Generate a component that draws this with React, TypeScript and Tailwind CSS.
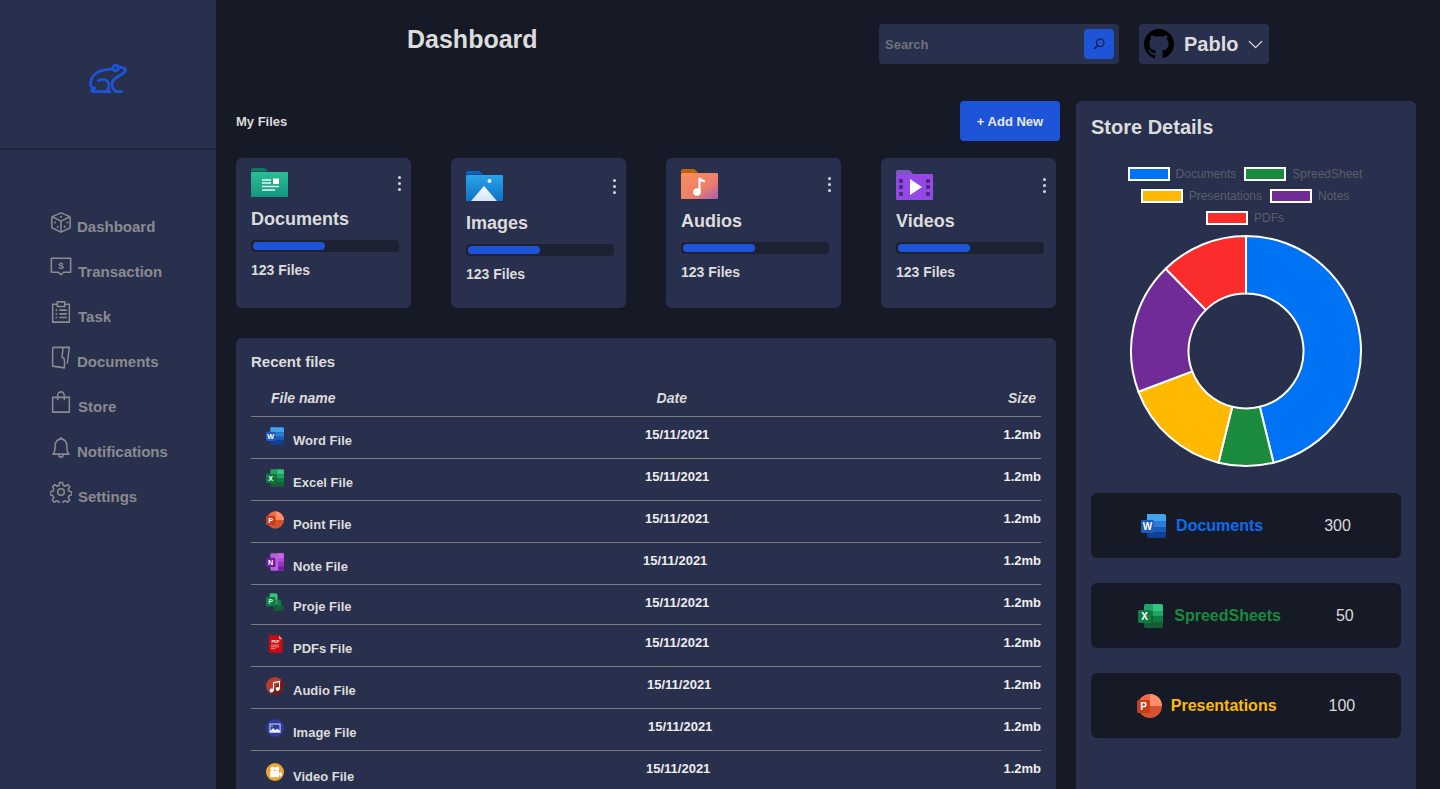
import React from 'react';
import { ChevronDown } from 'lucide-react';
import { BsGithub } from 'react-icons/bs';

type IconProps = { className?: string };

const FrogLogo = () => (
  <svg viewBox="0 0 38 30" className="w-[38px] h-[30px]" fill="none" stroke="#1d54d8" strokeWidth="2.800" strokeLinecap="round" strokeLinejoin="round">
    <circle cx="26.700" cy="5" r="2.700" />
    <path d="M23 6C17 6.600 11 7 7.500 10 3.500 13 1.500 16 1.500 20.500c.1 2.500 1.800 4.500 4.500 4.700l-2.500 1c-1.200.8-1 2.500.8 2.500h16.500" />
    <path d="M9.500 17.500c3.500-2 8.500-1.500 10 2.500 1 3-.5 6.500-2 8.700" />
    <path d="M27.500 14.500c-3 2-5 4.500-4.500 7.500.5 3 2.500 6.700 5 6.700h4.500" />
    <path d="M29.500 3.500l4.500 1.300c2.500.7 3 2.700 1.300 4.500-2.300 2.200-5.300 3.200-7.800 5.200" />
  </svg>
);

const DiceIcon = () => (
  <svg viewBox="0 0 24 24" className="w-[22px] h-[23px] -ml-px" fill="none" stroke="currentColor" strokeWidth="1.700" strokeLinejoin="round">
    <path d="M12 1.500l9 3.800c.6.300 1 .8 1 1.500v10c0 .7-.4 1.200-1 1.500l-9 4.200-9-4.200c-.6-.3-1-.8-1-1.500v-10c0-.7.4-1.200 1-1.500z" />
    <path d="M2.400 5.800L12 10.500l9.600-4.700M12 10.500v12.200" />
    <g fill="currentColor" stroke="none">
      <circle cx="12" cy="5.800" r="1.200" />
      <circle cx="5.500" cy="12" r="1.100" />
      <circle cx="8.500" cy="17" r="1.100" />
      <circle cx="16" cy="16.500" r="1.100" />
      <circle cx="19" cy="12" r="1.100" />
    </g>
  </svg>
);

const BillIcon = () => (
  <svg viewBox="0 0 24 24" className="w-[22px] h-[21px] -ml-px" preserveAspectRatio="none" fill="none" stroke="currentColor" strokeWidth="1.700" strokeLinejoin="round">
    <path d="M1.500 2.500h21v16h-7.600L12 21.500l-2.900-3H1.500z" />
    <text x="12" y="14.500" textAnchor="middle" fontSize="11" fontWeight="700" fill="currentColor" stroke="none" fontFamily="Liberation Sans, sans-serif">$</text>
  </svg>
);

const ClipIcon = () => (
  <svg viewBox="0 0 24 24" className="w-[20px] h-[22px]" preserveAspectRatio="none" fill="none" stroke="currentColor" strokeWidth="1.800">
    <path d="M7.500 3.500H2v19.500h20V3.500h-5.500" />
    <path d="M7.500 1h9v5h-9z" />
    <path d="M5.500 10h2M10 10h9M5.500 14h2M10 14h9M5.500 18h2M10 18h9" />
  </svg>
);

const DoorIcon = () => (
  <svg viewBox="0 0 24 24" className="w-[20px] h-[23px]" preserveAspectRatio="none" fill="none" stroke="currentColor" strokeWidth="1.800" strokeLinejoin="round">
    <path d="M2 1.500h20l-2.500 17" />
    <path d="M2 1.500v19.500l14 1.800c.6-4.500.2-8-.4-9.800l-2.400-1.500 1.400-10" />
  </svg>
);

const BagIcon = () => (
  <svg viewBox="0 0 24 24" className="w-[20px] h-[22px]" preserveAspectRatio="none" fill="none" stroke="currentColor" strokeWidth="1.800">
    <path d="M2 7h20v16H2z" />
    <path d="M8 10V5a4 4 0 018 0v5" />
  </svg>
);

const BellIcon = () => (
  <svg viewBox="0 0 24 24" className="w-[20px] h-[23px]" preserveAspectRatio="none" fill="none" stroke="currentColor" strokeWidth="1.800" strokeLinejoin="round">
    <path d="M12 3a7 7 0 00-7 7c0 5-.6 7.400-2.500 9h19c-1.900-1.600-2.500-4-2.500-9a7 7 0 00-7-7z" />
    <path d="M12 1v2M9.500 19.500a2.500 2.500 0 005 0" />
  </svg>
);

const GearIcon = () => (
  <svg viewBox="0 0 24 24" className="w-[22px] h-[22px] -ml-px" fill="none" stroke="currentColor" strokeWidth="1.700" strokeLinejoin="round">
    <circle cx="12" cy="12" r="3.600" />
    <path d="M10.300 1.700h3.400l.6 3 2.300 1 2.600-1.700 2.400 2.400-1.700 2.600 1 2.300 3 .6v3.400l-3 .6-1 2.300 1.700 2.600-2.400 2.400-2.600-1.700-2.300 1-.6 3h-3.400l-.6-3-2.300-1-2.600 1.700-2.400-2.400 1.700-2.600-1-2.300-3-.6v-3.400l3-.6 1-2.300L2.900 6.400l2.400-2.400 2.600 1.700 2.300-1z" />
  </svg>
);

// office style icons, a dark tile with a letter over colored bands
const WordIcon = ({ className }: IconProps) => (
  <svg viewBox="0 0 25 24" className={className}>
    <path d="M6 0h17a2 2 0 012 2v5H6z" fill="#41a5ee" />
    <path d="M6 7h19v6H6z" fill="#2b7cd3" />
    <path d="M6 13h19v5H6z" fill="#185abd" />
    <path d="M6 18h19v4a2 2 0 01-2 2H8a2 2 0 01-2-2z" fill="#103f91" />
    <rect x="0" y="6" width="13" height="13" rx="1.500" fill="#1f5cb8" />
    <text x="6.500" y="16" textAnchor="middle" fontSize="10" fontWeight="700" fill="#fff" fontFamily="Liberation Sans, sans-serif">W</text>
  </svg>
);

const ExcelIcon = ({ className }: IconProps) => (
  <svg viewBox="0 0 25 24" className={className}>
    <path d="M6 2a2 2 0 012-2h7v7H6z" fill="#21a366" />
    <path d="M15 0h8a2 2 0 012 2v5H15z" fill="#33c481" />
    <path d="M6 7h9v5H6z" fill="#107c41" />
    <path d="M15 7h10v5H15z" fill="#21a366" />
    <path d="M6 12h19v10a2 2 0 01-2 2H8a2 2 0 01-2-2z" fill="#185c37" />
    <path d="M15 12h10v6H15z" fill="#107c41" />
    <rect x="0" y="6" width="13" height="13" rx="1.500" fill="#107c41" />
    <text x="6.500" y="16" textAnchor="middle" fontSize="10" fontWeight="700" fill="#fff" fontFamily="Liberation Sans, sans-serif">X</text>
  </svg>
);

const PptIcon = ({ className }: IconProps) => (
  <svg viewBox="0 0 25 24" className={className}>
    <circle cx="13" cy="12" r="12" fill="#d35230" />
    <path d="M13 0a12 12 0 0112 12H13z" fill="#ff8f6b" />
    <path d="M13 0a12 12 0 00-12 12h12z" fill="#ed6c47" />
    <rect x="0" y="6" width="13" height="13" rx="1.500" fill="#c43e1c" />
    <text x="6.500" y="16" textAnchor="middle" fontSize="10" fontWeight="700" fill="#fff" fontFamily="Liberation Sans, sans-serif">P</text>
  </svg>
);

const NoteIcon = ({ className }: IconProps) => (
  <svg viewBox="0 0 25 24" className={className}>
    <path d="M6 2a2 2 0 012-2h15a2 2 0 012 2v20a2 2 0 01-2 2H8a2 2 0 01-2-2z" fill="#ba5fde" />
    <path d="M17 0h6a2 2 0 012 2v5h-8z" fill="#ca64ea" />
    <path d="M17 7h8v5h-8z" fill="#ae4bd5" />
    <path d="M17 12h8v6h-8z" fill="#9332bf" />
    <path d="M17 18h8v4a2 2 0 01-2 2h-6z" fill="#7719aa" />
    <rect x="0" y="6" width="13" height="13" rx="1.500" fill="#6f1d9b" />
    <text x="6.500" y="16" textAnchor="middle" fontSize="10" fontWeight="700" fill="#fff" fontFamily="Liberation Sans, sans-serif">N</text>
  </svg>
);

const ProjectIcon = ({ className }: IconProps) => (
  <svg viewBox="0 0 25 24" className={className}>
    <path d="M5 2a2 2 0 012-2h6a3 3 0 013 3v7H5z" fill="#33c481" />
    <path d="M5 10h13v6H5z" fill="#1f9a63" />
    <path d="M11 16h12a2 2 0 012 2v4a2 2 0 01-2 2H13a2 2 0 01-2-2z" fill="#185c37" />
    <path d="M16 9h3a2 2 0 012 2v7h-5z" fill="#107c41" />
    <rect x="0" y="5" width="13" height="13" rx="1.500" fill="#107c41" />
    <text x="6.500" y="15" textAnchor="middle" fontSize="10" fontWeight="700" fill="#c8f0d8" fontFamily="Liberation Sans, sans-serif">P</text>
  </svg>
);

const PdfIcon = ({ className }: IconProps) => (
  <svg viewBox="0 0 25 24" className={className}>
    <path d="M4 1a1 1 0 011-1h13l5 5.500V23a1 1 0 01-1 1H5a1 1 0 01-1-1z" fill="#cc0a10" />
    <path d="M18 0l5 5.500h-5z" fill="#f08a8a" />
    <text x="13" y="10.500" textAnchor="middle" fontSize="5.500" fontWeight="700" fill="#fff" fontFamily="Liberation Sans, sans-serif">PDF</text>
    <path d="M7 13.500h11M7 16h11M7 18.500h6" stroke="#f6b6b6" strokeWidth="1.100" />
  </svg>
);

const AudioIcon = ({ className }: IconProps) => (
  <svg viewBox="0 0 24 24" className={className}>
    <circle cx="12" cy="12" r="12" fill="#b83a30" />
    <path d="M12 24a12 12 0 01-6-1.600L21 4a12 12 0 01-9 20z" fill="#6b1c1a" />
    <path d="M10 7.500l8-1.500v10" fill="none" stroke="#fff" strokeWidth="1.500" />
    <path d="M10 7.500V18" fill="none" stroke="#fff" strokeWidth="1.500" />
    <circle cx="7.500" cy="18" r="2.600" fill="#fff" />
    <circle cx="15.500" cy="16" r="2.600" fill="#fff" />
  </svg>
);

const ImageIcon = ({ className }: IconProps) => (
  <svg viewBox="0 0 24 24" className={className}>
    <circle cx="12" cy="12" r="12" fill="#2e3a9c" />
    <rect x="4.500" y="6" width="15" height="12" fill="#c6cfee" />
    <rect x="6" y="7.500" width="12" height="7" fill="#2e3a9c" />
    <path d="M4.500 18l5-6 3 3 2.500-2.500 4.500 5.500z" fill="#eef1fb" />
    <circle cx="8" cy="9.500" r="1" fill="#c6cfee" />
  </svg>
);

const VideoIcon = ({ className }: IconProps) => (
  <svg viewBox="0 0 24 24" className={className}>
    <circle cx="12" cy="12" r="12" fill="#eda52f" />
    <circle cx="8.800" cy="7.500" r="3" fill="#fff" />
    <circle cx="14.800" cy="7.500" r="3" fill="#fff" />
    <rect x="5.500" y="10.500" width="12" height="8.500" rx="1" fill="#fff" />
    <path d="M17.500 14l3.500-2.500v7L17.500 16z" fill="#fff" />
  </svg>
);

const DocsFolder = () => (
  <svg viewBox="0 0 37 30" className="w-[37px] h-[30px]">
    <defs>
      <linearGradient id="docsF" x1="0" y1="0" x2="0" y2="1">
        <stop offset="0" stopColor="#2bbd96" />
        <stop offset="1" stopColor="#14977f" />
      </linearGradient>
    </defs>
    <path d="M0 2a2 2 0 012-2h10c2 0 3 1 5 3.500H0z" fill="#0b7a5e" />
    <path d="M0 5a1 1 0 011-1h35a1 1 0 011 1v23a1 1 0 01-1 1H1a1 1 0 01-1-1z" fill="url(#docsF)" />
    <path d="M11 12h9M11 15h9M11 18.500h17M11 22h13" stroke="#e6f7f2" strokeWidth="1.300" />
    <rect x="22" y="10.500" width="6" height="5.500" fill="#fff" />
  </svg>
);

const ImagesFolder = () => (
  <svg viewBox="0 0 37 30" className="w-[37px] h-[30px]">
    <defs>
      <linearGradient id="imgF" x1="0" y1="0" x2="0" y2="1">
        <stop offset="0" stopColor="#2aa4ea" />
        <stop offset="1" stopColor="#0f6fc8" />
      </linearGradient>
      <linearGradient id="imgM" x1="0" y1="0" x2="0" y2="1">
        <stop offset="0" stopColor="#ffffff" />
        <stop offset="1" stopColor="#cfe3f8" />
      </linearGradient>
    </defs>
    <path d="M0 2a2 2 0 012-2h10c2 0 3 1.500 5 3.500H0z" fill="#0b62c0" />
    <path d="M0 5a1 1 0 011-1h35a1 1 0 011 1v24a1 1 0 01-1 1H1a1 1 0 01-1-1z" fill="url(#imgF)" />
    <path d="M5 30L18 15l13 15z" fill="url(#imgM)" />
    <circle cx="23.500" cy="10" r="2" fill="#e8f4fd" />
  </svg>
);

const AudiosFolder = () => (
  <svg viewBox="0 0 37 30" className="w-[37px] h-[30px]">
    <defs>
      <linearGradient id="audF" x1="0" y1="0" x2="1" y2="1">
        <stop offset="0" stopColor="#f98d5a" />
        <stop offset=".6" stopColor="#ee7f6a" />
        <stop offset="1" stopColor="#a45fb0" />
      </linearGradient>
    </defs>
    <path d="M0 2a2 2 0 012-2h10c2 0 3 1.500 5 4H0z" fill="#bb630f" />
    <path d="M0 5a1 1 0 011-1h35a1 1 0 011 1v24a1 1 0 01-1 1H1a1 1 0 01-1-1z" fill="url(#audF)" />
    <path d="M18.500 23V9c1 2.500 4 3 5.500 3.500" fill="none" stroke="#fff" strokeWidth="2.200" />
    <circle cx="16" cy="23" r="3.800" fill="#fff" />
  </svg>
);

const VideosFolder = () => (
  <svg viewBox="0 0 37 30" className="w-[37px] h-[30px]">
    <path d="M0 2a2 2 0 012-2h10c2 0 3 1.500 5 4H0z" fill="#7e57c2" />
    <path d="M0 5a1 1 0 011-1h35a1 1 0 011 1v24a1 1 0 01-1 1H1a1 1 0 01-1-1z" fill="#9448e8" />
    <g fill="#4b2a7c">
      <rect x="3" y="9" width="4" height="4" rx="1" />
      <rect x="3" y="15" width="4" height="4" rx="1" />
      <rect x="3" y="22" width="4" height="4" rx="1" />
      <rect x="30" y="9" width="4" height="4" rx="1" />
      <rect x="30" y="15" width="4" height="4" rx="1" />
      <rect x="30" y="22" width="4" height="4" rx="1" />
    </g>
    <path d="M14 9l12 8-12 8z" fill="#fff" />
  </svg>
);

const nav = [
  { label: 'Dashboard', Icon: DiceIcon, labelClass: 'ml-[5px] mt-[7px]' },
  { label: 'Transaction', Icon: BillIcon, labelClass: 'ml-[6px] mt-[7px]' },
  { label: 'Task', Icon: ClipIcon, labelClass: 'ml-[7px] mt-[7px]' },
  { label: 'Documents', Icon: DoorIcon, labelClass: 'ml-[6px] mt-[7px]' },
  { label: 'Store', Icon: BagIcon, labelClass: 'ml-[7px] mt-[7px]' },
  { label: 'Notifications', Icon: BellIcon, labelClass: 'ml-[6px] mt-[7px]' },
  { label: 'Settings', Icon: GearIcon, labelClass: 'ml-[6px] mt-[7px]' },
];

const cards = [
  { title: 'Documents', Icon: DocsFolder, pad: 'pt-[10px]', titleClass: 'mt-[11px]' },
  { title: 'Images', Icon: ImagesFolder, pad: 'pt-[13px]', titleClass: 'mt-[12px]' },
  { title: 'Audios', Icon: AudiosFolder, pad: 'pt-[11px]', titleClass: 'mt-[12px]' },
  { title: 'Videos', Icon: VideosFolder, pad: 'pt-[12px]', titleClass: 'mt-[11px]' },
];

const files = [
  { name: 'Word File', Icon: WordIcon, rowClass: 'h-[42px]', nameClass: 'pt-[16px]', dateClass: 'ml-[379px]' },
  { name: 'Excel File', Icon: ExcelIcon, rowClass: 'h-[42px]', nameClass: 'pt-[16px]', dateClass: 'ml-[379px]' },
  { name: 'Point File', Icon: PptIcon, rowClass: 'h-[42px]', nameClass: 'pt-[16px]', dateClass: 'ml-[379px]' },
  { name: 'Note File', Icon: NoteIcon, rowClass: 'h-[42px]', nameClass: 'pt-[16px]', dateClass: 'ml-[377px]' },
  { name: 'Proje File', Icon: ProjectIcon, rowClass: 'h-[40px]', nameClass: 'pt-[14px]', dateClass: 'ml-[379px]' },
  { name: 'PDFs File', Icon: PdfIcon, rowClass: 'h-[42px]', nameClass: 'pt-[16px]', dateClass: 'ml-[379px]' },
  { name: 'Audio File', Icon: AudioIcon, rowClass: 'h-[42px]', nameClass: 'pt-[16px]', dateClass: 'ml-[381px]' },
  { name: 'Image File', Icon: ImageIcon, rowClass: 'h-[42px]', nameClass: 'pt-[16px]', dateClass: 'ml-[382px]' },
  { name: 'Video File', Icon: VideoIcon, rowClass: 'h-[42px]', nameClass: 'pt-[18px]', dateClass: 'ml-[380px]' },
];

const legend = [
  { label: 'Documents', box: 'bg-[#0073f5]' },
  { label: 'SpreedSheet', box: 'bg-[#1a8a3c]' },
  { label: 'Presentations', box: 'bg-[#ffb900]' },
  { label: 'Notes', box: 'bg-[#702b96]' },
  { label: 'PDFs', box: 'bg-[#fb2c2c]' },
];

const slices = [
  { value: 300, color: '#0073f5' },
  { value: 50, color: '#1a8a3c' },
  { value: 100, color: '#ffb900' },
  { value: 120, color: '#702b96' },
  { value: 80, color: '#fb2c2c' },
];

const stats = [
  { label: 'Documents', value: '300', Icon: WordIcon, textClass: 'text-[#0b6cf2]', gap: 'ml-[61px]', iconGap: 'ml-[10px]' },
  { label: 'SpreedSheets', value: '50', Icon: ExcelIcon, textClass: 'text-[#1a8a3c]', gap: 'ml-[55px]', iconGap: 'ml-[11px]' },
  { label: 'Presentations', value: '100', Icon: PptIcon, textClass: 'text-[#ffb900]', gap: 'ml-[52px]', iconGap: 'ml-[9px]' },
];

const polar = (r: number, deg: number) => {
  const a = ((deg - 90) * Math.PI) / 180;
  return `${r * Math.cos(a)} ${r * Math.sin(a)}`;
};

const Donut = () => {
  const total = slices.reduce((s, x) => s + x.value, 0);
  let start = 0;
  return (
    <svg viewBox="-118 -118 236 236" className="w-[236px] h-[236px]">
      {slices.map((s) => {
        const end = start + (s.value / total) * 360;
        const large = end - start > 180 ? 1 : 0;
        const d = `M${polar(115, start)} A115 115 0 ${large} 1 ${polar(115, end)} L${polar(57.5, end)} A57.5 57.5 0 ${large} 0 ${polar(57.5, start)} Z`;
        start = end;
        return <path key={s.color} d={d} fill={s.color} stroke="#fff" strokeWidth="2" strokeLinejoin="round" />;
      })}
    </svg>
  );
};

const App = () => {
  return (
    <div className="flex h-screen overflow-hidden bg-[#161a27] font-['Liberation_Sans',Arial,sans-serif] text-[#dcdcdc]">
      {/* Sidebar */}
      <aside className="w-[216px] shrink-0 bg-[#28304d]">
        <div className="h-[150px] flex items-center justify-center border-b-2 border-[#1f2438] pt-[8px]">
          <FrogLogo />
        </div>
        <nav className="mt-[61px] pl-[51px] flex flex-col text-[#8a8b8f]">
          {nav.map(({ label, Icon, labelClass }) => (
            <div key={label} className="flex items-start h-[45px]">
              <Icon />
              <span className={`text-[15px] leading-[17px] font-bold ${labelClass}`}>{label}</span>
            </div>
          ))}
        </nav>
      </aside>

      <main className="flex-1 min-w-0">
        {/* Header */}
        <header className="flex items-start justify-between h-[101px] pt-[24px] pl-[191px] pr-[171px]">
          <h1 className="text-[25px] leading-[30px] font-bold">Dashboard</h1>
          <div className="flex gap-5">
            <div className="flex items-center justify-between w-[240px] h-[40px] rounded bg-[#28304d] pl-[6px] pr-[5px]">
              <span className="text-[13px] font-bold text-[#70727a] pt-[1px]">Search</span>
              <button className="flex items-center justify-center w-[30px] h-[30px] rounded-sm bg-[#1d54d8]">
                <svg viewBox="0 0 24 24" className="w-[12px] h-[12px]" fill="none" stroke="#10172e" strokeWidth="2.200">
                  <circle cx="14.500" cy="9.500" r="7.500" />
                  <path d="M9 15l-7 7" />
                </svg>
              </button>
            </div>
            <div className="flex items-center w-[130px] h-[40px] rounded bg-[#28304d] pl-[5px]">
              <BsGithub className="text-black" size={30} />
              <span className="ml-[10px] text-[20px] font-bold">Pablo</span>
              <ChevronDown className="ml-[5px] text-[#dcdcdc]" size={25} strokeWidth={1.300} />
            </div>
          </div>
        </header>

        <div className="flex pl-5">
          {/* Left column */}
          <div className="w-[824px] shrink-0">
            <div className="flex items-center justify-between h-[40px]">
              <h2 className="text-[13px] font-bold pt-[2px]">My Files</h2>
              <button className="w-[100px] h-[40px] rounded-sm bg-[#1d54d8] text-[13px] font-bold text-[#e8e8e8] pt-[1px]">+ Add New</button>
            </div>

            <div className="flex gap-10 mt-[17px]">
              {cards.map(({ title, Icon, pad, titleClass }) => (
                <div key={title} className={`w-[175px] h-[150px] rounded-md bg-[#28304d] px-[15px] ${pad}`}>
                  <div className="flex items-center justify-between -mr-[6px]">
                    <Icon />
                    <div className="flex flex-col gap-[3px] w-[4px]">
                      <span className="w-[3px] h-[3px] rounded-full bg-[#d5d8df]" />
                      <span className="w-[3px] h-[3px] rounded-full bg-[#d5d8df]" />
                      <span className="w-[3px] h-[3px] rounded-full bg-[#d5d8df]" />
                    </div>
                  </div>
                  <h3 className={`text-[18px] leading-[21px] font-bold ${titleClass}`}>{title}</h3>
                  <div className="w-[148px] h-[12px] rounded-sm bg-[#1c2133] p-[2px] mt-[10px]">
                    <div className="w-[72px] h-[8px] rounded-sm bg-[#1d54d8]" />
                  </div>
                  <p className="mt-[10px] text-[14px] leading-[16px] font-bold">123 Files</p>
                </div>
              ))}
            </div>

            {/* Recent files */}
            <section className="mt-[30px] w-[820px] h-[600px] rounded-md bg-[#28304d] px-[15px] pt-[15px]">
              <h2 className="text-[15px] leading-[18px] font-bold">Recent files</h2>
              <div className="flex justify-between items-center h-[43px] pt-[6px] mt-[3px] border-b border-[#7d7d7d] pl-5 pr-[5px] text-[14px] italic font-bold">
                <span>File name</span>
                <span>Date</span>
                <span>Size</span>
              </div>
              {files.map(({ name, Icon, rowClass, nameClass, dateClass }) => (
                <div key={name} className={`flex items-start border-b border-[#7d7d7d] ${rowClass}`}>
                  <div className={`flex items-start w-0 pl-[15px] text-[13px] leading-[15px] font-bold whitespace-nowrap ${nameClass}`}>
                    <span className="w-[27px] shrink-0 -mt-[6px]"><Icon className="w-[18px] h-[18px]" /></span>
                    <span>{name}</span>
                  </div>
                  <span className={`pt-[10px] text-[13px] leading-[15px] font-bold text-[#eeeeee] ${dateClass}`}>15/11/2021</span>
                  <span className="ml-auto pt-[10px] text-[13px] leading-[15px] font-bold text-[#eeeeee]">1.2mb</span>
                </div>
              ))}
            </section>
          </div>

          {/* Store details */}
          <aside className="w-[340px] h-[760px] shrink-0 ml-4 rounded-md bg-[#28304d] px-[15px] pt-[15px]">
            <h2 className="text-[20px] leading-[23px] font-bold">Store Details</h2>
            <div className="mt-[24px] ml-[9px] w-[290px] flex flex-wrap justify-center gap-x-[8px]">
              {legend.map(({ label, box }) => (
                <div key={label} className="flex items-center h-[22px]">
                  <span className={`w-[42px] h-[14px] border-2 border-white ${box}`} />
                  <span className="ml-[6px] text-[12px] text-[#5a5e6b]">{label}</span>
                </div>
              ))}
            </div>
            <div className="flex justify-center mt-[4px]"><Donut /></div>
            <div className="mt-[24px] flex flex-col gap-[25px]">
              {stats.map(({ label, value, Icon, textClass, gap, iconGap }) => (
                <div key={label} className="flex items-center justify-center h-[65px] rounded-md bg-[#161a27]">
                  <Icon className="w-[25px] h-[24px]" />
                  <span className={`text-[16px] font-bold ${textClass} ${iconGap}`}>{label}</span>
                  <span className={`text-[16px] ${gap}`}>{value}</span>
                </div>
              ))}
            </div>
          </aside>
        </div>
      </main>
    </div>
  );
};

export default App;
